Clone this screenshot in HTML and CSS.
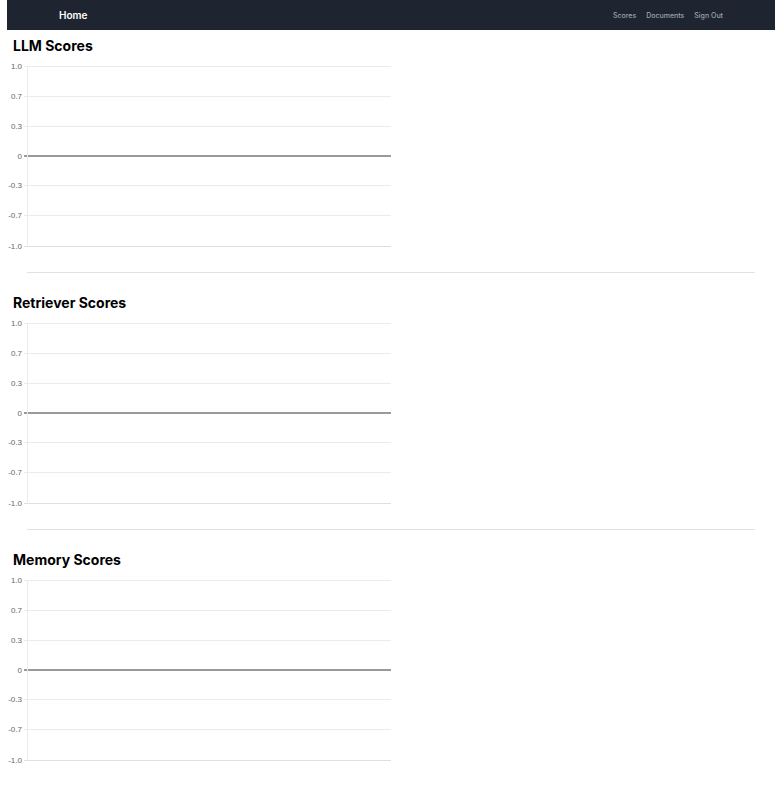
FILE: index.html
```
<!DOCTYPE html>
<html lang="en">
<head>
<meta charset="utf-8">
<title>Scores</title>
<link rel="stylesheet" href="styles.css">
</head>
<body>
<nav class="navbar">
  <a class="brand" href="#">Home</a>
  <div class="links">
    <a href="#">Scores</a>
    <a href="#">Documents</a>
    <a href="#">Sign Out</a>
  </div>
</nav>
<main>
  <section class="panel">
    <h2>LLM Scores</h2>
    <svg class="chart" role="img" aria-label="LLM Scores">
      <g class="grid">
        <rect x="17" y="6" width="100%" height="1"/>
        <rect x="17" y="36" width="100%" height="1"/>
        <rect x="17" y="66" width="100%" height="1"/>
        <rect x="17" y="125" width="100%" height="1"/>
        <rect x="17" y="155" width="100%" height="1"/>
        <rect class="base" x="17" y="186" width="100%" height="1"/>
        <rect class="zero" x="17" y="95" width="100%" height="2"/>
        <rect x="20" y="6" width="1" height="181"/>
      </g>
      <g class="ticks">
        <text x="15" y="9">1.0</text>
        <text x="15" y="39">0.7</text>
        <text x="15" y="69">0.3</text>
        <text x="15" y="99">0</text>
        <text x="15" y="128">-0.3</text>
        <text x="15" y="158">-0.7</text>
        <text x="15" y="189">-1.0</text>
      </g>
    </svg>
  </section>
  <hr>
  <section class="panel">
    <h2>Retriever Scores</h2>
    <svg class="chart" role="img" aria-label="Retriever Scores">
      <g class="grid">
        <rect x="17" y="6" width="100%" height="1"/>
        <rect x="17" y="36" width="100%" height="1"/>
        <rect x="17" y="66" width="100%" height="1"/>
        <rect x="17" y="125" width="100%" height="1"/>
        <rect x="17" y="155" width="100%" height="1"/>
        <rect class="base" x="17" y="186" width="100%" height="1"/>
        <rect class="zero" x="17" y="95" width="100%" height="2"/>
        <rect x="20" y="6" width="1" height="181"/>
      </g>
      <g class="ticks">
        <text x="15" y="9">1.0</text>
        <text x="15" y="39">0.7</text>
        <text x="15" y="69">0.3</text>
        <text x="15" y="99">0</text>
        <text x="15" y="128">-0.3</text>
        <text x="15" y="158">-0.7</text>
        <text x="15" y="189">-1.0</text>
      </g>
    </svg>
  </section>
  <hr>
  <section class="panel">
    <h2>Memory Scores</h2>
    <svg class="chart" role="img" aria-label="Memory Scores">
      <g class="grid">
        <rect x="17" y="6" width="100%" height="1"/>
        <rect x="17" y="36" width="100%" height="1"/>
        <rect x="17" y="66" width="100%" height="1"/>
        <rect x="17" y="125" width="100%" height="1"/>
        <rect x="17" y="155" width="100%" height="1"/>
        <rect class="base" x="17" y="186" width="100%" height="1"/>
        <rect class="zero" x="17" y="95" width="100%" height="2"/>
        <rect x="20" y="6" width="1" height="181"/>
      </g>
      <g class="ticks">
        <text x="15" y="9">1.0</text>
        <text x="15" y="39">0.7</text>
        <text x="15" y="69">0.3</text>
        <text x="15" y="99">0</text>
        <text x="15" y="128">-0.3</text>
        <text x="15" y="158">-0.7</text>
        <text x="15" y="189">-1.0</text>
      </g>
    </svg>
  </section>
</main>
</body>
</html>
```
FILE: styles.css
```
* {
  box-sizing: border-box;
}

body {
  margin: 0 8px 0 7px;
  background: #fff;
  color: #000;
  font-family: Inter, "Liberation Sans", sans-serif;
}

.navbar {
  display: flex;
  align-items: center;
  justify-content: space-between;
  height: 30px;
  padding: 0 52px;
  background: #1f2530;
}

.navbar a {
  text-decoration: none;
}

.brand {
  color: #fff;
  font-size: 10px;
  font-weight: 600;
}

.links {
  display: flex;
  gap: 10px;
  font-size: 7px;
  font-weight: 500;
}

.links a {
  color: #9ca3af;
}

.panel h2 {
  margin: 0;
  padding: 6px 6px 4px;
  font-size: 14px;
  font-weight: 700;
  line-height: 20px;
}

.chart {
  display: block;
  width: 50%;
  height: 200px;
}

.grid {
  fill: #ebebeb;
}

.grid .base {
  fill: #dfdfdf;
}

.grid .zero {
  fill: #999;
}

.ticks {
  fill: #666;
  font-family: "Liberation Sans", Arial, sans-serif;
  font-size: 8px;
  text-anchor: end;
}

hr {
  height: 1px;
  margin: 12px 20px 14px;
  border: 0;
  background: #e0e0e8;
}
```
